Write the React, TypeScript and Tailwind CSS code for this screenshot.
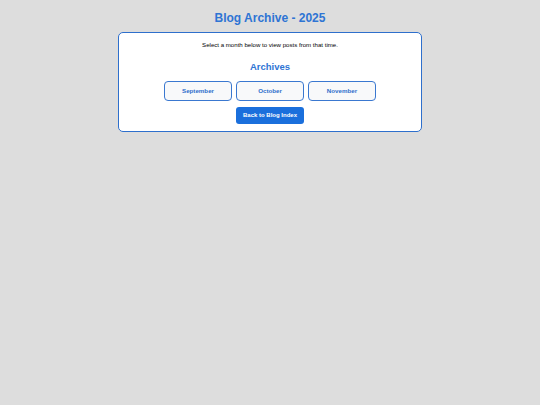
import React from 'react';

const months = ['September', 'October', 'November'];

const App: React.FC = () => {
    return (
        <div className="min-h-[405px] w-full bg-[#dddddd] pt-[11px] font-['Liberation_Sans',Arial,sans-serif]">
            <h1 className="text-center text-[12px] leading-[14px] font-bold text-[#2e74d4]">Blog Archive - 2025</h1>
            <div className="mx-auto mt-[7px] w-[304px] rounded-[5px] border border-[#2e6fcc] bg-white pt-[8px] pb-[7px]">
                <p className="text-center text-[6.1px] leading-[8px] text-black">Select a month below to view posts from that time.</p>
                <h2 className="mt-[12px] text-center text-[9.5px] leading-[12px] font-bold text-[#2e74d4]">Archives</h2>
                <div className="mt-[8px] flex justify-center gap-[4px]">
                    {months.map((m) => (
                        <button
                            key={m}
                            className="h-[20px] w-[68px] rounded-[4px] border border-[#3a78d0] bg-[#f8f9fa] text-[6.2px] font-bold text-[#2e6fcc]"
                        >
                            {m}
                        </button>
                    ))}
                </div>
                <div className="mt-[6px] flex justify-center">
                    <button className="h-[17px] w-[68px] rounded-[3px] bg-[#1a6fdc] text-[6px] font-bold text-white">
                        Back to Blog Index
                    </button>
                </div>
            </div>
        </div>
    );
};

export default App;
